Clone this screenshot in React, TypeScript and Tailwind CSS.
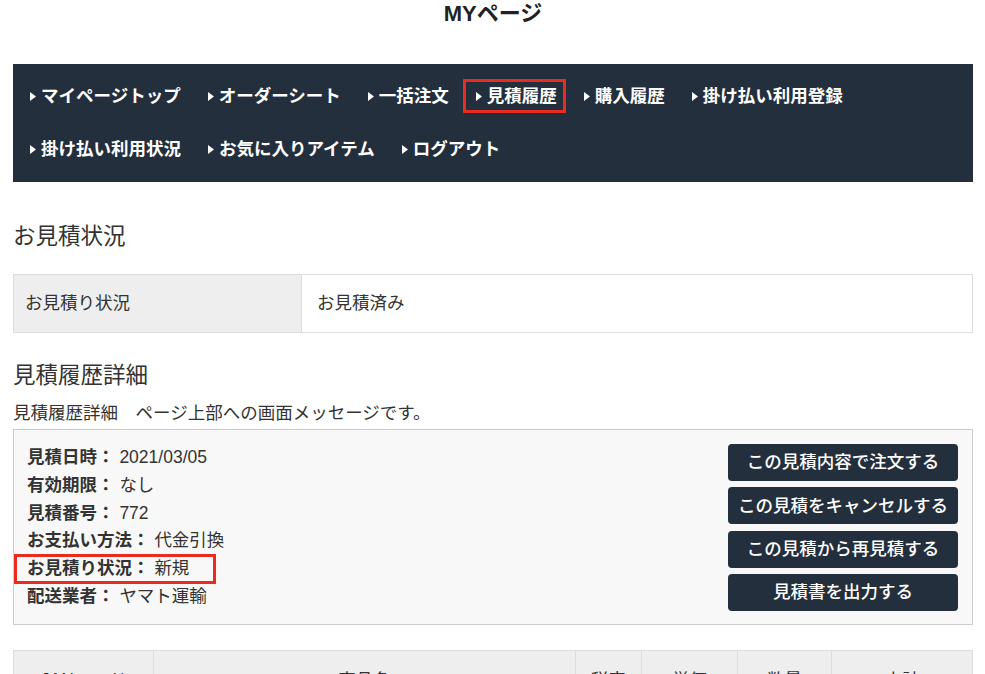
const navItems = [
  "マイページトップ",
  "オーダーシート",
  "一括注文",
  "見積履歴",
  "購入履歴",
  "掛け払い利用登録",
  "掛け払い利用状況",
  "お気に入りアイテム",
  "ログアウト",
];

const details: { label: string; value: string; marked?: boolean }[] = [
  { label: "見積日時：", value: "2021/03/05" },
  { label: "有効期限：", value: "なし" },
  { label: "見積番号：", value: "772" },
  { label: "お支払い方法：", value: "代金引換" },
  { label: "お見積り状況：", value: "新規", marked: true },
  { label: "配送業者：", value: "ヤマト運輸" },
];

const actions = [
  "この見積内容で注文する",
  "この見積をキャンセルする",
  "この見積から再見積する",
  "見積書を出力する",
];

const columns = [
  { label: "JANコード", w: "w-[140px]" },
  { label: "商品名", w: "w-[422px]" },
  { label: "税率", w: "w-[66px]" },
  { label: "単価", w: "w-[96px]" },
  { label: "数量", w: "w-[94px]" },
  { label: "小計", w: "flex-1" },
];

function Arrow() {
  return (
    <svg width="6" height="9" viewBox="0 0 6 9" className="mr-[5px] shrink-0">
      <path d="M0 0 L6 4.5 L0 9 Z" fill="#ffffff" />
    </svg>
  );
}

export default function App() {
  return (
    <div className="min-h-screen bg-white text-[#333] font-['Liberation_Sans','Noto_Sans_CJK_JP',sans-serif] text-[17.5px]">
      <div className="mx-[13px] w-[960px]">
        <h1 className="text-center text-[22px] leading-[28px] font-bold text-[#222]">MYページ</h1>

        {/* Nav */}
        <nav className="mt-[36px] bg-[#242f3e] py-[6px] pl-[3.5px] flex flex-wrap">
          {navItems.map((item) => (
            <div key={item} className="relative h-[53px] px-[13.5px] flex items-center text-white font-bold">
              <Arrow />
              {item}
              {item === "見積履歴" && (
                <span className="absolute left-[1px] right-[4px] top-[9px] bottom-[10px] border-[3px] border-[#ea2b1f]" />
              )}
            </div>
          ))}
        </nav>

        {/* Status */}
        <h2 className="mt-[40px] text-[22.5px] leading-[30px]">お見積状況</h2>
        <div className="mt-[22px] flex h-[59px] border border-[#ddd]">
          <div className="w-[288px] bg-[#eee] border-r border-[#ddd] flex items-center pl-[11px]">お見積り状況</div>
          <div className="flex-1 flex items-center pl-[15px]">お見積済み</div>
        </div>

        {/* Detail */}
        <h2 className="mt-[28px] text-[22.5px] leading-[30px]">見積履歴詳細</h2>
        <p className="mt-[10px] leading-[24px]">見積履歴詳細　ページ上部への画面メッセージです。</p>
        <div className="mt-[4px] bg-[#f8f8f8] border border-[#ccc] pt-[14px] pb-[13px] pl-[13px] pr-[14px] flex justify-between">
          <div className="leading-[27.8px]">
            {details.map((d) => (
              <div key={d.label} className="relative">
                <span className="font-bold">{d.label}</span> {d.value}
                {d.marked && (
                  <span className="absolute left-[-13px] top-[-1px] w-[202px] h-[30px] border-[3px] border-[#ea2b1f]" />
                )}
              </div>
            ))}
          </div>
          <div className="w-[230px] flex flex-col justify-between">
            {actions.map((a) => (
              <button
                key={a}
                className="h-[37px] rounded-[4px] bg-[#242f3e] text-white text-[17.5px] font-medium flex items-center justify-center"
              >
                {a}
              </button>
            ))}
          </div>
        </div>

        {/* Item table header */}
        <div className="mt-[25px] flex border border-[#ddd] bg-[#eee] h-[60px]">
          {columns.map((c, i) => (
            <div
              key={c.label}
              className={`${c.w} flex items-center justify-center ${i < columns.length - 1 ? "border-r border-[#ddd]" : ""}`}
            >
              {c.label}
            </div>
          ))}
        </div>
      </div>
    </div>
  );
}
